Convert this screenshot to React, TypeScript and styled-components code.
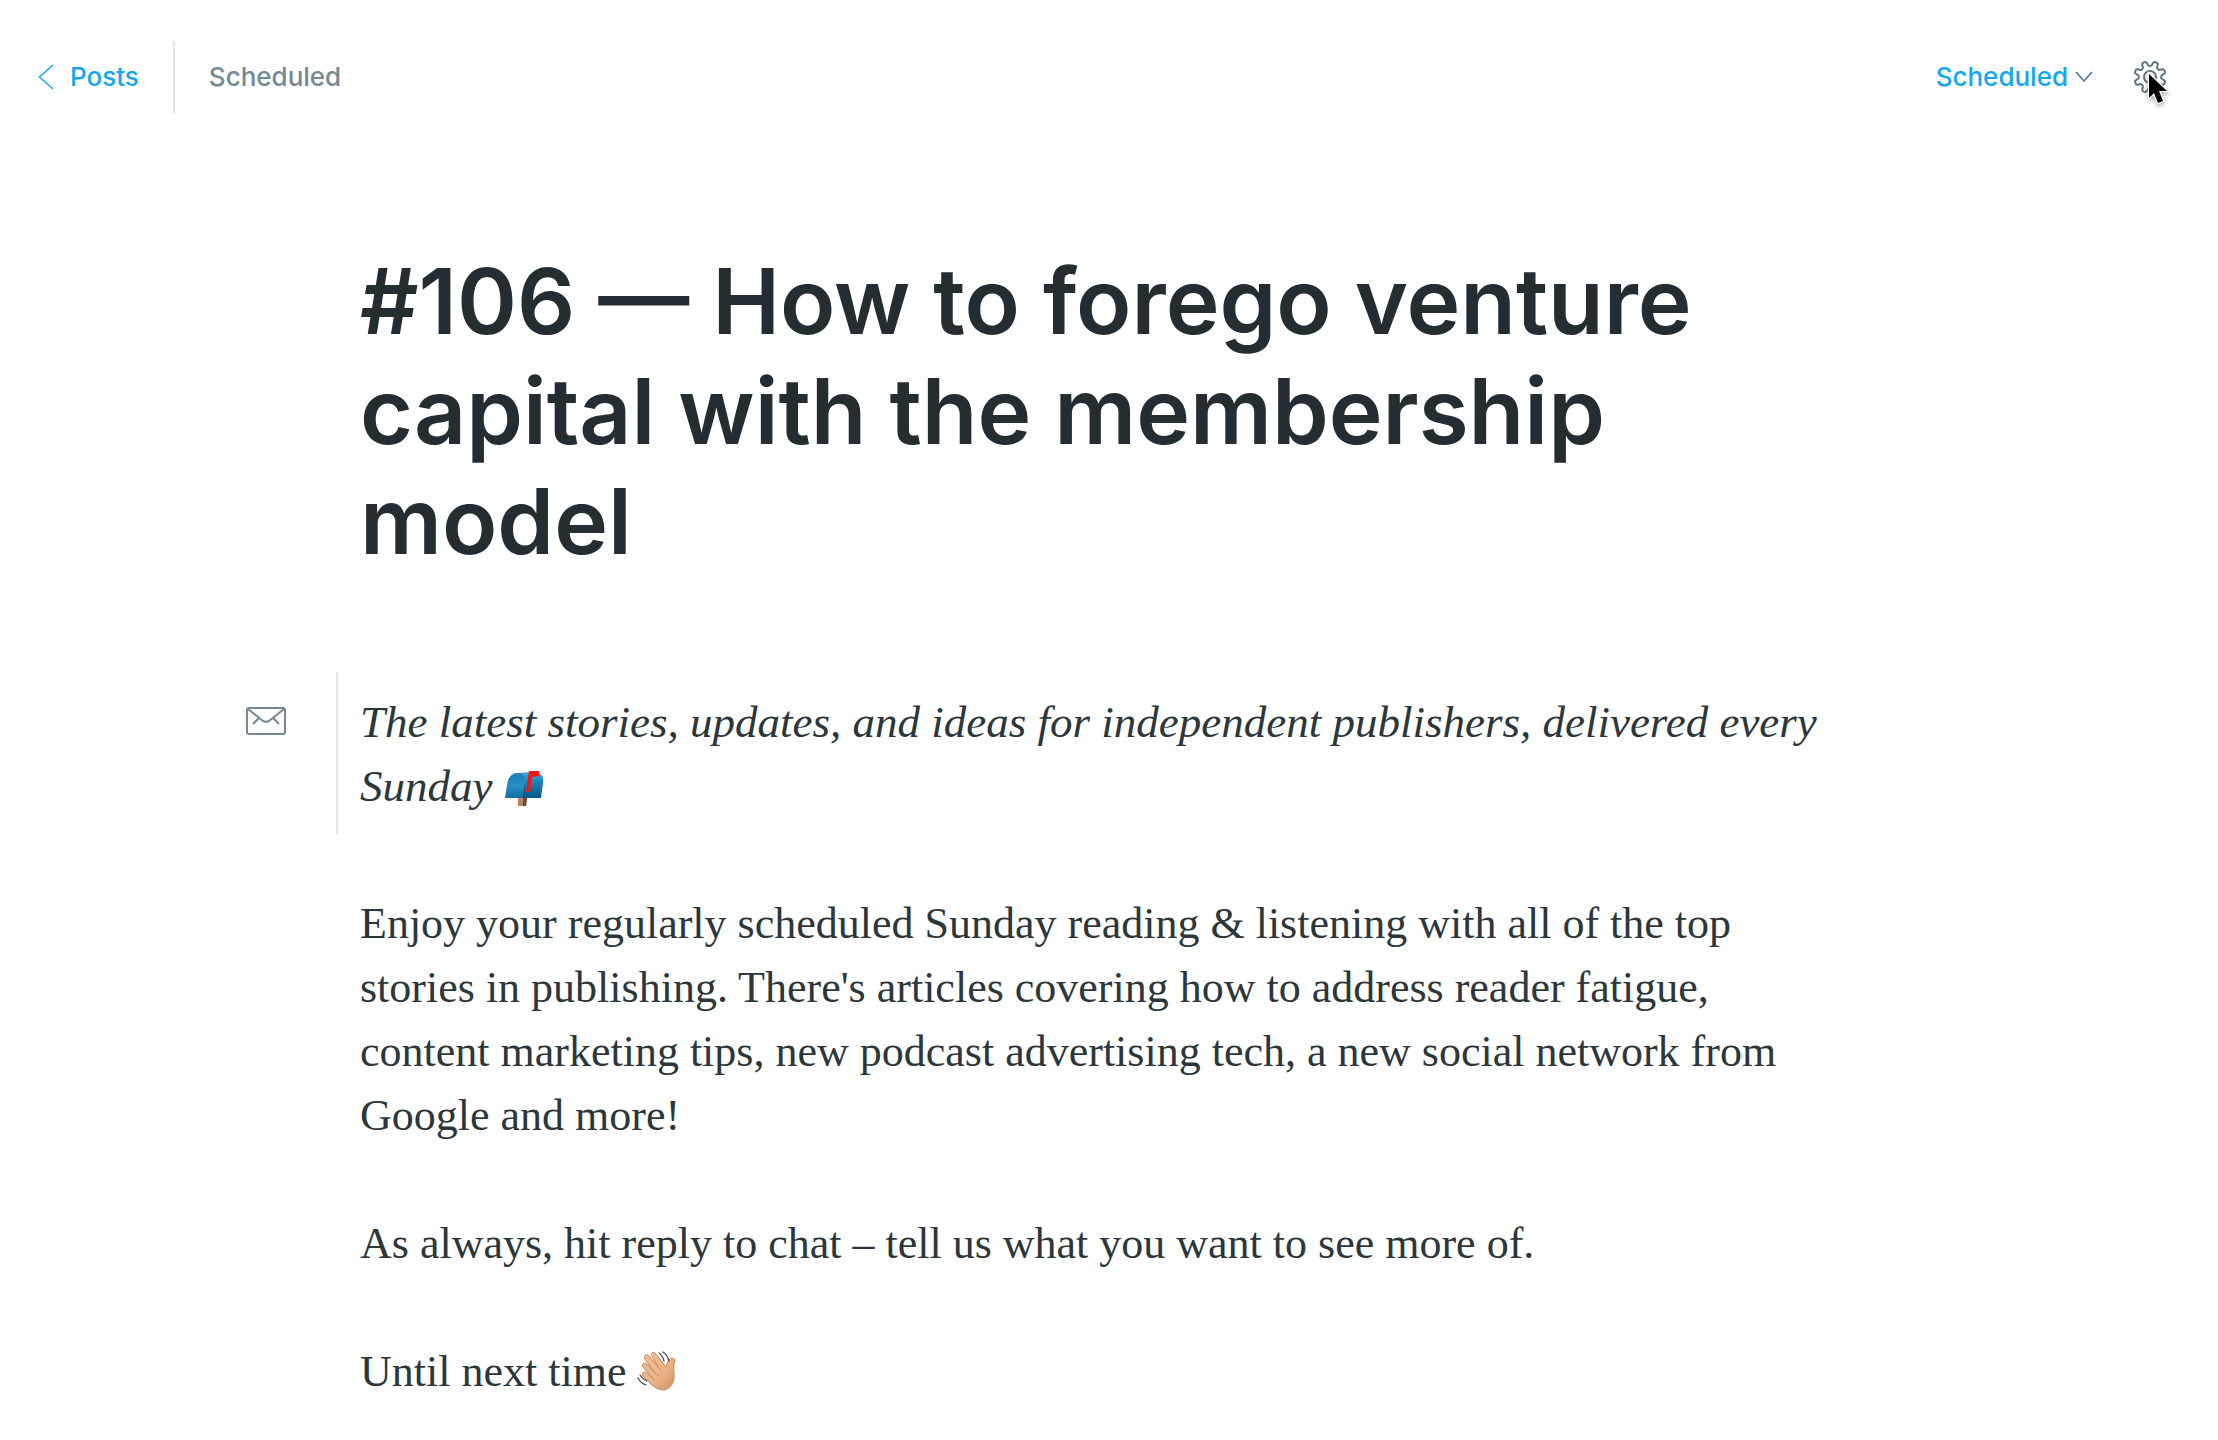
import React from "react";
import styled, { createGlobalStyle } from "styled-components";

const sans = `Inter, "Liberation Sans", sans-serif`;
const serif = `"Liberation Serif", serif`;

const GlobalStyle = createGlobalStyle`
  *, *::before, *::after { box-sizing: border-box; }
  body { margin: 0; background: #fff; color: #242e32; font-family: ${sans}; }
`;

const Page = styled.div`
  min-height: 100vh;
  display: flex;
  flex-direction: column;
`;

const Header = styled.header`
  display: flex;
  align-items: center;
  justify-content: space-between;
  padding: 41px 50px 0 36px;
  font-size: 26px;
  line-height: 32px;
  font-weight: 500;
`;

const Group = styled.div<{ $gap: number }>`
  display: flex;
  align-items: center;
  gap: ${(p) => p.$gap}px;
`;

const BackLink = styled.a`
  display: flex;
  align-items: center;
  gap: 14px;
  color: #14a7ee;
  text-decoration: none;
`;

const Divider = styled.span`
  width: 2px;
  height: 72px;
  background: #dfe8ed;
`;

const Status = styled.span`
  color: #738a94;
`;

const PublishButton = styled.button`
  display: flex;
  align-items: center;
  gap: 6px;
  padding: 0;
  border: 0;
  background: none;
  color: #14a7ee;
  font: inherit;
  cursor: pointer;
`;

const SettingsButton = styled.button`
  position: relative;
  display: flex;
  padding: 0;
  border: 0;
  background: none;
  color: #5d7681;
  cursor: pointer;
`;

const Pointer = styled.svg`
  position: absolute;
  left: 11px;
  top: 11px;
  overflow: visible;
  filter: drop-shadow(0 2px 2px rgba(0, 0, 0, 0.35));
`;

const Article = styled.main`
  width: 100%;
  max-width: 1546px;
  margin: 0 auto;
  padding: 133px 24px 0;
`;

const Title = styled.h1`
  margin: 0 0 96px;
  font-size: 91px;
  line-height: 110px;
  font-weight: 600;
`;

const Body = styled.div`
  padding-right: 24px;
  font-family: ${serif};
  font-size: 44px;
  line-height: 64px;
  color: #2c373c;

  p { margin: 0 0 64px; }
`;

const EmailCard = styled.section`
  position: relative;
  margin: 0 -24px 58px;
  padding: 18px 0 16px 22px;
  border-left: 2px solid #dbe8f3;
  font-size: 45px;
  font-style: italic;

  p { margin: 0; }
`;

const CardIcon = styled.svg`
  position: absolute;
  left: -93px;
  top: 34px;
`;

const Emoji = styled.svg`
  vertical-align: -5px;
`;

function Mailbox() {
  return (
    <Emoji width="40" height="36" viewBox="0 0 40 36" role="img" aria-label="Closed mailbox with raised flag">
      <defs>
        <linearGradient id="box" x1="0" y1="0" x2="0" y2="1">
          <stop offset="0" stopColor="#4aa6d6" />
          <stop offset="0.35" stopColor="#1f86bc" />
          <stop offset="1" stopColor="#065684" />
        </linearGradient>
        <linearGradient id="door" x1="0" y1="0" x2="0" y2="1">
          <stop offset="0" stopColor="#1b7fb5" />
          <stop offset="0.5" stopColor="#2790c6" />
          <stop offset="1" stopColor="#0f6f9f" />
        </linearGradient>
      </defs>
      <path d="M14 26h9l-1 10h-8z" fill="#b98460" />
      <path d="M19 28h4l-1 8h-3z" fill="#6e4b36" />
      <path d="M12 3 30 2c7 0 10 4 9 11l-2 15H18z" fill="url(#box)" />
      <path d="M1 28 3 15C4 7 8 3 13 3c7 0 9 5 8 12l-2 13z" fill="url(#door)" />
      <path d="M21 15 19 28" fill="none" stroke="#0b5c87" strokeWidth="1" />
      <path d="M25 1h10v5l-7 1-2 15h-4z" fill="#f91414" />
    </Emoji>
  );
}

function WavingHand() {
  return (
    <Emoji width="40" height="40" viewBox="0 0 40 40" role="img" aria-label="Waving hand">
      <defs>
        <linearGradient id="skin" x1="0" y1="0" x2="1" y2="1">
          <stop offset="0" stopColor="#efc095" />
          <stop offset="0.6" stopColor="#e9b286" />
          <stop offset="1" stopColor="#cf8b59" />
        </linearGradient>
      </defs>
      <path
        d="M15 34 6 25c-2-3 1-5 3-3l5 4-8-10c-2-3 1-5 4-3l7 8L8 8C6 5 9 2 12 5l9 11L15 5c-2-3 2-5 4-2l10 13c1-3 1-5 3-7 2-3 7-2 6 1-2 4-1 7-1 12 1 9-3 16-11 17-4 0-7-2-11-5z"
        fill="url(#skin)"
        stroke="#c98b5d"
        strokeWidth="1"
      />
      <path d="m14 26 4 3M17 21l5 4M21 16l4 4" stroke="#c98b5d" strokeWidth="1" fill="none" />
      <path
        d="M26 1c3 2 5 5 6 9M22 2c3 2 4 4 5 8M1 27c2 4 5 6 8 7M3 24c2 3 4 5 7 6"
        fill="none"
        stroke="#4d5052"
        strokeWidth="1.3"
        strokeLinecap="round"
      />
    </Emoji>
  );
}

function gearPath(cx: number, cy: number, teeth: number, mid: number, depth: number) {
  const steps = 144;
  const points: string[] = [];
  for (let i = 0; i < steps; i++) {
    const a = (i / steps) * Math.PI * 2;
    const wave = Math.tanh(2.2 * Math.cos(teeth * (a + Math.PI / 2 + Math.PI / teeth))) / Math.tanh(2.2);
    const r = mid + depth * wave;
    points.push(`${(cx + r * Math.cos(a)).toFixed(2)} ${(cy + r * Math.sin(a)).toFixed(2)}`);
  }
  return `M${points.join("L")}Z`;
}

export default function App() {
  return (
    <Page>
      <GlobalStyle />
      <Header>
        <Group $gap={34}>
          <BackLink href="#posts">
            <svg width="20" height="26" viewBox="0 0 20 26" fill="none" stroke="currentColor" strokeWidth="1.5">
              <path d="M17 1 3.500 13 17 25" />
            </svg>
            Posts
          </BackLink>
          <Divider />
          <Status>Scheduled</Status>
        </Group>
        <Group $gap={38}>
          <PublishButton type="button">
            Scheduled
            <svg width="20" height="12" viewBox="0 0 20 12" fill="none" stroke="#4b7d98" strokeWidth="1.6">
              <path d="m2 1 8 9 8-9" />
            </svg>
          </PublishButton>
          <SettingsButton type="button" aria-label="Post settings">
            <svg width="36" height="36" viewBox="0 0 36 36" fill="none" stroke="currentColor" strokeWidth="2">
              <path d={gearPath(18, 18, 8, 13.5, 2.3)} strokeLinejoin="round" />
              <circle cx="18" cy="18" r="6" />
            </svg>
            <Pointer width="26" height="38" viewBox="0 0 26 38" aria-hidden="true">
              <path
                d="M6 4v24l5-5 4 10 5-2-4-10h8z"
                fill="#000"
                stroke="#fff"
                strokeWidth="2.500"
                paintOrder="stroke"
              />
            </Pointer>
          </SettingsButton>
        </Group>
      </Header>
      <Article>
        <Title>#106 — How to forego venture capital with the membership model</Title>
        <Body>
          <EmailCard aria-label="Email introduction">
            <CardIcon width="42" height="30" viewBox="0 0 42 30" fill="none" stroke="#738a94" strokeWidth="2">
              <rect x="2" y="2" width="38" height="26" rx="2" />
              <path d="m3 3 15 12c2 1 4 1 6 0L39 3M14 12l-6 6M28 12l6 6" />
            </CardIcon>
            <p>
              The latest stories, updates, and ideas for independent publishers, delivered every Sunday <Mailbox />
            </p>
          </EmailCard>
          <p>
            Enjoy your regularly scheduled Sunday reading &amp; listening with all of the top stories in publishing.
            There's articles covering how to address reader fatigue, content marketing tips, new podcast advertising
            tech, a new social network from Google and more!
          </p>
          <p>As always, hit reply to chat – tell us what you want to see more of.</p>
          <p>
            Until next time <WavingHand />
          </p>
        </Body>
      </Article>
    </Page>
  );
}
